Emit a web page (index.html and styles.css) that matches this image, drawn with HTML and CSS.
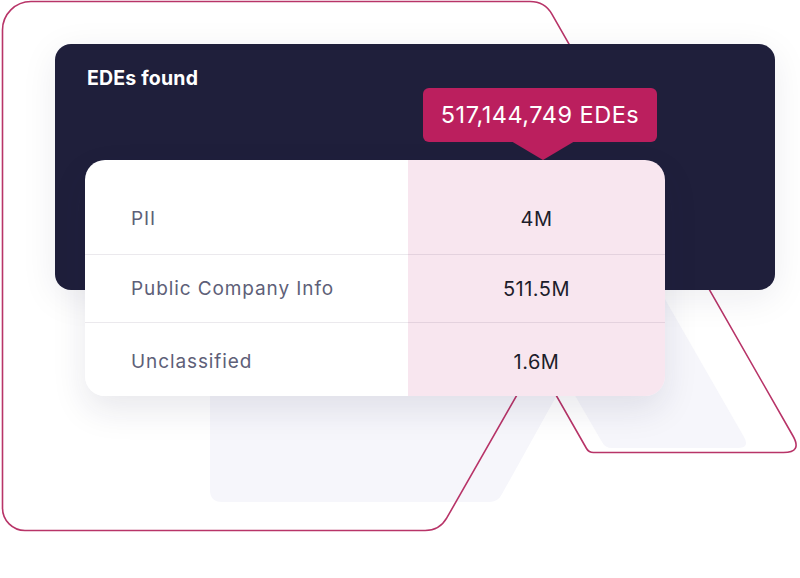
FILE: index.html
```html
<!DOCTYPE html>
<html lang="en">
<head>
<meta charset="utf-8">
<title>EDEs found</title>
<link rel="stylesheet" href="styles.css">
</head>
<body>
<div class="canvas">
  <svg class="backdrop" width="800" height="578" viewBox="0 0 800 578" aria-hidden="true">
    <path class="ghost" d="M210 380 L557 380 L557 395 L502 494 Q498 502 489 502 L222 502 Q210 502 210 490 Z"/>
    <path class="ghost" d="M508 280 L654 280 L744 437 Q750 448 738 448 L612 448 Q605 448 602 442 Z"/>
    <path class="outline" d="M2.5 30 A28.5 28.5 0 0 1 31 1.5 L530 1.5 Q544.7 1.5 551.9 14.1 L793 436 Q802.4 452.5 783.4 452.5 L593.4 452.5 Q588.8 452.5 586.5 448.5 L536.5 360.8 L446.8 517.9 Q439.6 530.5 425.1 530.5 L25 530.5 A22.5 22.5 0 0 1 2.5 508 Z"/>
  </svg>
  <section class="panel">
    <h2 class="panel-title">EDEs found</h2>
    <div class="table-card">
      <div class="total-tip">517,144,749 EDEs</div>
      <div class="row row-first">
        <span class="label">PII</span>
        <span class="value">4M</span>
      </div>
      <div class="row row-mid">
        <span class="label">Public Company Info</span>
        <span class="value">511.5M</span>
      </div>
      <div class="row row-last">
        <span class="label">Unclassified</span>
        <span class="value">1.6M</span>
      </div>
    </div>
  </section>
</div>
</body>
</html>
```
FILE: styles.css
```css
* { box-sizing: border-box; }

html, body {
  margin: 0;
  padding: 0;
  background: #ffffff;
}

body {
  font-family: Inter, "Noto Sans", sans-serif;
  width: 800px;
  height: 578px;
  overflow: hidden;
}

.canvas {
  position: relative;
  width: 800px;
  height: 578px;
  padding: 44px 0 0 55px;
}

.backdrop {
  position: absolute;
  left: 0;
  top: 0;
}

.ghost {
  fill: #f6f6fb;
}

.outline {
  fill: none;
  stroke: #b83468;
  stroke-width: 1.6;
}

.panel {
  position: relative;
  width: 720px;
  height: 246px;
  background: #1f1f3b;
  border-radius: 16px;
  padding: 22px 0 0 30px;
  box-shadow: 0 8px 36px rgba(30, 30, 70, 0.08);
}

.panel-title {
  margin: 0 0 0 2px;
  font-size: 19.5px;
  line-height: 24px;
  font-weight: 700;
  color: #ffffff;
  letter-spacing: 0.2px;
}

.table-card {
  position: relative;
  margin-top: 70px;
  width: 580px;
  border-radius: 20px;
  padding: 23px 0 0;
  background: linear-gradient(to right, #ffffff 0, #ffffff 323px, #f8e6ef 323px);
  box-shadow: 0 14px 34px rgba(30, 30, 70, 0.1);
}

.total-tip {
  position: absolute;
  left: 338px;
  top: -72px;
  width: 234px;
  height: 54px;
  border-radius: 6px;
  background: #bb1f5e;
  color: #ffffff;
  font-size: 23.5px;
  line-height: 54px;
  text-align: center;
  letter-spacing: 0.5px;
}

.total-tip::after {
  content: "";
  position: absolute;
  left: 88px;
  top: 53px;
  border-left: 32px solid transparent;
  border-right: 32px solid transparent;
  border-top: 19px solid #bb1f5e;
}

.row {
  display: grid;
  grid-template-columns: 323px 257px;
  align-items: center;
  border-bottom: 1px solid rgba(60, 40, 80, 0.1);
}

.row-first { height: 72px; }
.row-mid { height: 68px; }
.row-last {
  height: 73px;
  padding-top: 4px;
  border-bottom: none;
}

.label {
  padding-left: 46px;
  font-size: 19px;
  color: #5e5f78;
  letter-spacing: 0.9px;
}

.value {
  text-align: center;
  font-size: 20px;
  color: #1d1d2b;
  letter-spacing: 0.5px;
}
```
